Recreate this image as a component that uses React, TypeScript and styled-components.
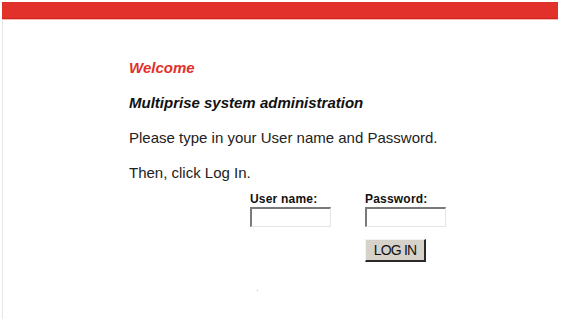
import styled, { createGlobalStyle } from 'styled-components';

const GlobalStyle = createGlobalStyle`
  html, body {
    margin: 0;
    padding: 0;
    background: #fff;
  }
  body {
    font-family: "Liberation Sans", Arial, sans-serif;
  }
`

const Page = styled.div`
  width: 568px;
  height: 319px;
  padding: 2px 10px 0 2px;
  box-sizing: border-box;
  display: flex;
  flex-direction: column;
  overflow: hidden;
`
const TopBar = styled.div`
  height: 16px;
  background-color: #e2302a;
  border-bottom: 1px solid #d0241e;
  box-shadow: 0 1px 0 #f7b6b2;
`
const Body = styled.div`
  flex: 1;
  border-left: 1px solid #e6e6e6;
  margin-top: 2px;
  padding: 38px 0 0 126px;
  position: relative;
`
const Welcome = styled.p`
  margin: 0;
  font-size: 15px;
  font-weight: bold;
  font-style: italic;
  color: #e2302a;
  line-height: 17px;
`
const Title = styled.p`
  margin: 18px 0 0;
  font-size: 15px;
  font-weight: bold;
  font-style: italic;
  color: #111;
  line-height: 17px;
`
const Text = styled.p`
  margin: 18px 0 0;
  font-size: 15px;
  color: #222;
  line-height: 17px;
`
const Form = styled.div`
  margin: 11px 0 0 121px;
  display: grid;
  grid-template-columns: 115px 82px;
  row-gap: 12px;
`
const Field = styled.div`
  display: flex;
  flex-direction: column;
`
const Label = styled.label`
  font-size: 12px;
  font-weight: bold;
  color: #111;
  line-height: 15px;
  letter-spacing: 0.2px;
`
const Input = styled.input`
  width: 81px;
  height: 20px;
  box-sizing: border-box;
  border-style: solid;
  border-width: 2px 1px 1px 2px;
  border-color: #7a7a7a #e4e4e4 #e4e4e4 #7a7a7a;
  background: #fff;
  padding: 0 2px;
  font-size: 12px;
  outline: none;
`
const Button = styled.button`
  grid-column: 2;
  width: 61px;
  height: 23px;
  box-sizing: border-box;
  background: #d6d2ca;
  border-style: solid;
  border-width: 1px 2px 2px 1px;
  border-color: #f4f2ee #2a2a2a #2a2a2a #f4f2ee;
  font-family: "Liberation Sans", Arial, sans-serif;
  font-size: 14px;
  color: #111;
  padding: 0;
  letter-spacing: -0.8px;
`
const Dot = styled.span`
  position: absolute;
  left: 254px;
  top: 269px;
  width: 1px;
  height: 1px;
  background: #bbb;
`

export default function App() {
  return (
    <>
      <GlobalStyle />
      <Page>
        <TopBar />
        <Body>
          <Welcome>Welcome</Welcome>
          <Title>Multiprise system administration</Title>
          <Text>Please type in your User name and Password.</Text>
          <Text>Then, click Log In.</Text>
          <Form>
            <Field>
              <Label>User name:</Label>
              <Input type="text" />
            </Field>
            <Field>
              <Label>Password:</Label>
              <Input type="password" />
            </Field>
            <Button>LOG IN</Button>
          </Form>
          <Dot />
        </Body>
      </Page>
    </>
  )
}
